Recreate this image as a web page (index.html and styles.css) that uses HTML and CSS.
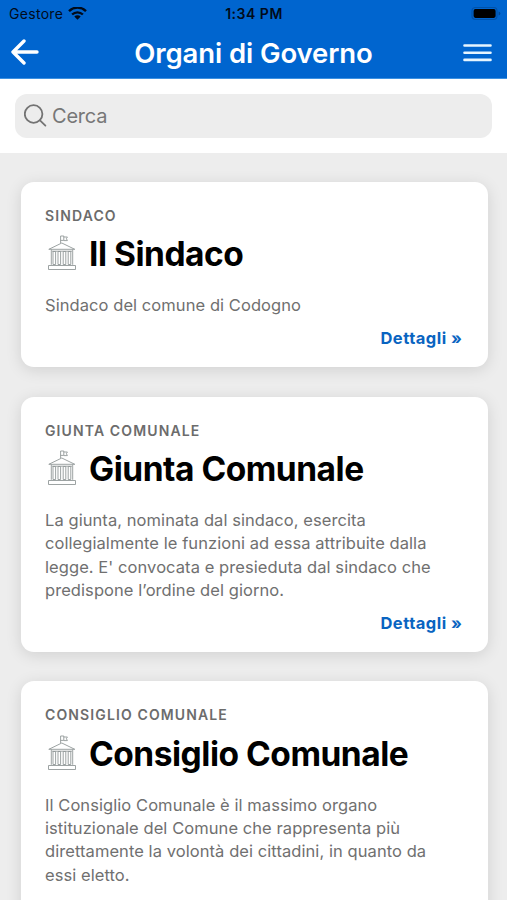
FILE: index.html
```html
<!DOCTYPE html>
<html lang="it">
<head>
<meta charset="utf-8">
<meta name="viewport" content="width=device-width, initial-scale=1">
<title>Organi di Governo</title>
<link rel="stylesheet" href="styles.css">
</head>
<body>
<svg class="sprite" width="0" height="0" aria-hidden="true">
  <symbol id="hall" viewBox="0 0 30 36">
    <g fill="none" stroke="#929898" stroke-width="0.9">
      <path d="M13.6 8V1h3.2v4.4h-3.2M16.8 2h3.6l-1 1.7 1 1.9h-3.6"/>
      <path d="M1.8 14.3 14.8 8l13 6.3z"/>
      <path d="M4.3 14.5v15.3M25.7 14.5v15.3M5 16.2h20"/>
      <path d="M6 16.5h2.6v13H6zM11 16.5h2.6v13H11zM16.2 16.5h2.6v13h-2.6zM21.2 16.5h2.6v13h-2.6z"/>
      <path d="M1.5 30.5h27v4h-27z"/>
    </g>
  </symbol>
</svg>
<header class="header">
  <div class="status">
    <div class="carrier"><span>Gestore</span>
      <svg width="19" height="14" viewBox="0 0 19 14"><g fill="none" stroke="#000b1a" stroke-width="2.4"><path d="M1 4.1a12.2 12.2 0 0 1 17 0"/><path d="M4.1 7.5a7.8 7.8 0 0 1 10.8 0"/></g><path d="M6.3 9.6a4.6 4.6 0 0 1 6.4 0L9.5 12.8z" fill="#000b1a"/></svg>
    </div>
    <div class="time">1:34 PM</div>
    <svg class="battery" width="30" height="14" viewBox="0 0 30 14"><rect x="1" y="0.5" width="25" height="12" rx="3.5" fill="none" stroke="#0052a9" stroke-width="1.2"/><rect x="2.6" y="2.1" width="22" height="8.8" rx="1.8" fill="#000"/><path d="M27.6 4.5v4q1.8-.6 1.8-2t-1.8-2" fill="#004a99"/></svg>
  </div>
  <div class="navbar">
    <svg width="30" height="28" viewBox="0 0 30 28" fill="none" stroke="#fff" stroke-width="3.4" stroke-linecap="round" stroke-linejoin="round"><path d="M27 13H3M14 2 3 13 14 24"/></svg>
    <h1 class="heading">Organi di Governo</h1>
    <svg width="30" height="20" viewBox="0 0 30 20" stroke="#e6f5ff" stroke-width="2.6" stroke-linecap="round"><path d="M1.5 2.5h26M1.5 9.7h26M1.5 16.9h26"/></svg>
  </div>
</header>
<div class="searchbar">
  <div class="search">
    <svg width="24" height="24" viewBox="0 0 24 24" fill="none" stroke="#737373" stroke-width="1.8" stroke-linecap="round"><circle cx="9.6" cy="10" r="8.8"/><path d="m16 16.4 5.4 5.2"/></svg>
    <span>Cerca</span>
  </div>
</div>
<main class="list">
  <article class="card">
    <div class="label">SINDACO</div>
    <div class="row"><svg class="icon"><use href="#hall"/></svg><h2 class="title">Il Sindaco</h2></div>
    <p class="text">Sindaco del comune di Codogno</p>
    <a class="more">Dettagli »</a>
  </article>
  <article class="card">
    <div class="label">GIUNTA COMUNALE</div>
    <div class="row"><svg class="icon"><use href="#hall"/></svg><h2 class="title">Giunta Comunale</h2></div>
    <p class="text">La giunta, nominata dal sindaco, esercita<br>collegialmente le funzioni ad essa attribuite dalla<br>legge. E' convocata e presieduta dal sindaco che<br>predispone l’ordine del giorno.</p>
    <a class="more">Dettagli »</a>
  </article>
  <article class="card card-last">
    <div class="label">CONSIGLIO COMUNALE</div>
    <div class="row"><svg class="icon"><use href="#hall"/></svg><h2 class="title">Consiglio Comunale</h2></div>
    <p class="text">Il Consiglio Comunale è il massimo organo<br>istituzionale del Comune che rappresenta più<br>direttamente la volontà dei cittadini, in quanto da<br>essi eletto.</p>
  </article>
</main>
</body>
</html>
```
FILE: styles.css
```css
* { box-sizing: border-box; }
html, body { height: 900px; overflow: hidden; }
body {
  margin: 0;
  background: #ededed;
  font-family: Inter, "Liberation Sans", sans-serif;
  display: flex;
  flex-direction: column;
}
svg { display: block; flex: none; }
.sprite { display: none; }
.header { flex: none; height: 79px; background: #0065cf; border-bottom: 1px solid #3c91e2; }
.status {
  height: 27px;
  padding: 0 6px 0 9px;
  display: grid;
  grid-template-columns: 1fr auto 1fr;
  align-items: center;
  color: #000b1a;
}
.carrier { display: flex; align-items: center; gap: 5px; font-size: 14px; letter-spacing: 0.3px; }
.time { font-size: 14px; font-weight: 600; letter-spacing: 0.5px; margin-right: 2px; }
.battery { justify-self: end; }
.navbar {
  height: 52px;
  padding: 0 14px 0 10px;
  display: flex;
  align-items: center;
  justify-content: space-between;
}
.heading { margin: 0 0 0 4px; font-size: 27.5px; font-weight: 600; letter-spacing: -0.1px; color: #fff; }
.searchbar { flex: none; height: 74px; padding: 15px 15px 0; background: #fff; }
.search {
  height: 44px;
  border-radius: 12px;
  background: #ededed;
  padding: 0 9px;
  display: flex;
  align-items: center;
  gap: 4px;
  font-size: 20px;
  letter-spacing: -0.2px;
  color: #777;
}
.list { padding: 28.5px 19.5px 0 20.5px; display: flex; flex-direction: column; gap: 29.3px; }
.card {
  flex: none;
  padding: 24.2px 25px 16.7px 24.5px;
  border-radius: 13px;
  background: #fff;
  box-shadow: 0 3px 16px rgba(0, 0, 0, 0.12);
  display: flex;
  flex-direction: column;
}
.card-last { height: 256px; }
.label { font-size: 14px; line-height: 20px; font-weight: 600; letter-spacing: 1.12px; color: #6c6c6c; }
.row { height: 40px; margin-top: 8.5px; display: flex; align-items: center; gap: 12px; }
.icon { width: 30px; height: 36px; margin: -2px 0 0 2px; }
.title { margin: 0; font-size: 33.5px; line-height: 40px; font-weight: 700; letter-spacing: -0.48px; color: #000; white-space: nowrap; }
.text { margin: 20px 0 0; font-size: 16.5px; line-height: 23.2px; letter-spacing: 0.07px; color: #707070; white-space: nowrap; }
.more { align-self: flex-end; margin-top: 10px; font-size: 16.5px; line-height: 23.2px; font-weight: 700; letter-spacing: 0.5px; color: #0964c1; }
```
